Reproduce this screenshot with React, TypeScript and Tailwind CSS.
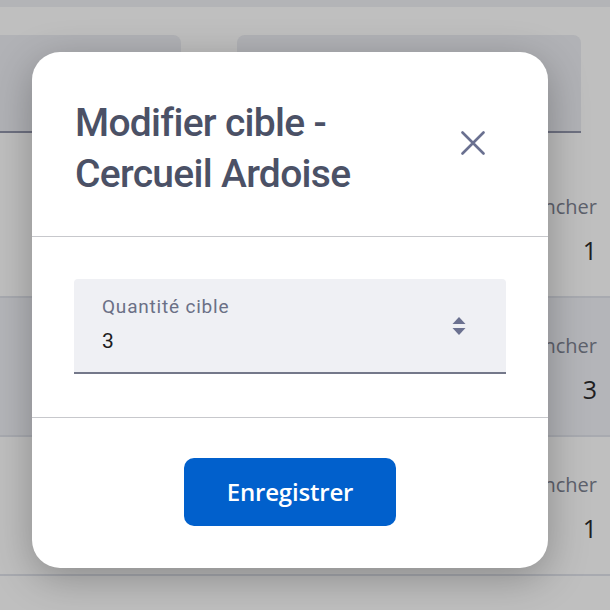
import { useState } from 'react';

const rows = [
  { label: 'Plancher', value: '1', dark: false },
  { label: 'Plancher', value: '3', dark: true },
  { label: 'Plancher', value: '1', dark: false },
];

function CloseIcon() {
  return (
    <svg width="24" height="24" viewBox="0 0 24 24" fill="none">
      <path d="M1.5 1.5 L22.5 22.5 M22.5 1.5 L1.5 22.5" stroke="#6a7090" strokeWidth="2.6" strokeLinecap="round" />
    </svg>
  );
}

function SpinnerIcon() {
  return (
    <svg width="14" height="20" viewBox="0 0 14 20" fill="#6b7190">
      <path d="M7 1 L13.5 8 H0.5 Z" />
      <path d="M7 19 L13.5 12 H0.5 Z" />
    </svg>
  );
}

export default function App() {
  const [target, setTarget] = useState('3');

  return (
    <div className="relative w-[610px] h-[610px] overflow-hidden bg-[#bfbfbf] font-['Open_Sans',sans-serif]">
      {/* page behind the dialog, dimmed */}
      <div className="h-[7px] bg-[#b3b4b7]" />
      <div className="mt-[28px] flex gap-[56px]">
        <div className="w-[181px] h-[98px] rounded-tr-lg bg-[#b1b2b6] border-b-2 border-[#6e7181]" />
        <div className="w-[344px] h-[98px] rounded-t-lg bg-[#b1b2b6] border-b-2 border-[#6e7181]" />
      </div>
      <div className="pt-[26px]">
        {rows.map((r, i) => (
          <div
            key={i}
            className={`h-[139px] border-b-2 border-[#a8aab0] flex flex-col items-end pr-[13px] ${r.dark ? 'bg-[#b4b5b9]' : 'bg-[#bfbfbf]'}`}
          >
            <span className="mt-[35px] text-[20px] leading-[26px] text-[#5d616c]">{r.label}</span>
            <span className="mt-[15px] text-[25px] leading-[30px] text-[#1f1f22]">{r.value}</span>
          </div>
        ))}
      </div>

      {/* dialog */}
      <div className="absolute left-[32px] top-[52px] w-[516px] h-[516px] bg-white rounded-[28px] shadow-[0_10px_40px_rgba(0,0,0,0.28)] flex flex-col">
        <div className="flex items-center justify-between pl-[43px] pr-[63px] h-[185px] border-b border-[#c7c8cc]">
          <h2 className="pt-[10px] font-['Roboto',sans-serif] font-medium text-[39px] leading-[51px] text-[#4b5166] tracking-[-0.7px]">
            Modifier cible -<br />Cercueil Ardoise
          </h2>
          <button className="w-[24px] h-[24px] -mt-[2px]">
            <CloseIcon />
          </button>
        </div>

        <div className="px-[42px] pt-[42px] pb-[43px] border-b border-[#c7c8cc]">
          <div className="h-[95px] bg-[#eff0f4] rounded-t-[4px] border-b-2 border-[#74788a] flex items-center pl-[28px] pr-[40px]">
            <div className="flex-1 flex flex-col font-['Roboto',sans-serif]">
              <span className="text-[19px] leading-[24px] tracking-[0.8px] text-[#6b7086] -mt-[2px]">Quantité cible</span>
              <input
                value={target}
                onChange={e => setTarget(e.target.value)}
                className="mt-[8px] text-[21px] leading-[28px] text-[#1c1c1e] bg-transparent outline-none w-[200px]"
              />
            </div>
            <SpinnerIcon />
          </div>
        </div>

        <div className="flex-1 flex items-center justify-center pb-[2px]">
          <button className="w-[212px] h-[68px] rounded-[10px] bg-[#0160cc] text-white font-semibold text-[24px] tracking-[-0.2px]">
            Enregistrer
          </button>
        </div>
      </div>
    </div>
  );
}
